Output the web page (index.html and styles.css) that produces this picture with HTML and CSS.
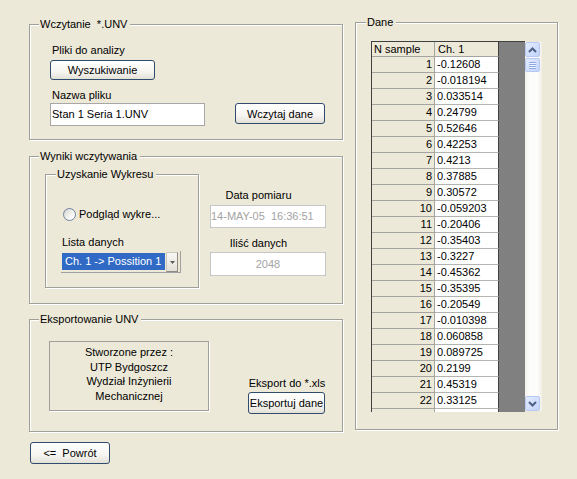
FILE: index.html
```html
<!DOCTYPE html>
<html lang="pl">
<head>
    <meta charset="UTF-8">
    <link rel="stylesheet" href="styles.css">
</head>
<body>
<div class="window">
    <div class="left-col">
        <div class="panel panel-load">
            <div class="panel-title">Wczytanie  *.UNV</div>
            <div class="files-label">Pliki do analizy</div>
            <button class="btn btn-search">Wyszukiwanie</button>
            <div class="name-label">Nazwa pliku</div>
            <div class="file-row">
                <div class="edit file-edit">Stan 1 Seria 1.UNV</div>
                <button class="btn btn-read">Wczytaj dane</button>
            </div>
        </div>

        <div class="panel panel-results">
            <div class="panel-title">Wyniki wczytywania</div>
            <div class="results-body">
                <div class="group">
                    <div class="panel-title group-title">Uzyskanie Wykresu</div>
                    <div class="radio-row">
                        <span class="radio"></span>
                        <span class="radio-text">Podgląd wykre...</span>
                    </div>
                    <div class="list-label">Lista danych</div>
                    <div class="select">
                        <div class="select-value">Ch. 1 -&gt; Possition 1</div>
                        <div class="select-arrow">
                            <svg width="5" height="3" viewBox="0 0 5 3"><path d="M0 0h5L2.5 3z" fill="#5a5a5a"/></svg>
                        </div>
                    </div>
                </div>
                <div class="info-col">
                    <div class="info-label">Data pomiaru</div>
                    <div class="edit info-edit date-edit">14-MAY-05  16:36:51</div>
                    <div class="info-label count-label">Iliść danych</div>
                    <div class="edit info-edit count-edit">2048</div>
                </div>
            </div>
        </div>

        <div class="panel panel-export">
            <div class="panel-title">Eksportowanie UNV</div>
            <div class="export-body">
                <div class="credits">
                    Stworzone przez :<br>
                    UTP Bydgoszcz<br>
                    Wydział Inżynierii<br>
                    Mechanicznej
                </div>
                <div class="export-col">
                    <div class="export-label">Eksport do *.xls</div>
                    <button class="btn btn-export">Eksportuj dane</button>
                </div>
            </div>
        </div>

        <button class="btn btn-back">&lt;=  Powrót</button>
    </div>

    <div class="panel data-panel">
        <div class="panel-title data-title">Dane</div>
        <div class="table-wrap">
            <div class="table-view">
                <div class="grid">
                    <div class="grid-row head-row">
                        <div class="cell-n head-n">N sample</div>
                        <div class="cell-v head-v">Ch. 1</div>
                    </div>
                    <div class="grid-row"><div class="cell-n">1</div><div class="cell-v">-0.12608</div></div>
                    <div class="grid-row"><div class="cell-n">2</div><div class="cell-v">-0.018194</div></div>
                    <div class="grid-row"><div class="cell-n">3</div><div class="cell-v">0.033514</div></div>
                    <div class="grid-row"><div class="cell-n">4</div><div class="cell-v">0.24799</div></div>
                    <div class="grid-row"><div class="cell-n">5</div><div class="cell-v">0.52646</div></div>
                    <div class="grid-row"><div class="cell-n">6</div><div class="cell-v">0.42253</div></div>
                    <div class="grid-row"><div class="cell-n">7</div><div class="cell-v">0.4213</div></div>
                    <div class="grid-row"><div class="cell-n">8</div><div class="cell-v">0.37885</div></div>
                    <div class="grid-row"><div class="cell-n">9</div><div class="cell-v">0.30572</div></div>
                    <div class="grid-row"><div class="cell-n">10</div><div class="cell-v">-0.059203</div></div>
                    <div class="grid-row"><div class="cell-n">11</div><div class="cell-v">-0.20406</div></div>
                    <div class="grid-row"><div class="cell-n">12</div><div class="cell-v">-0.35403</div></div>
                    <div class="grid-row"><div class="cell-n">13</div><div class="cell-v">-0.3227</div></div>
                    <div class="grid-row"><div class="cell-n">14</div><div class="cell-v">-0.45362</div></div>
                    <div class="grid-row"><div class="cell-n">15</div><div class="cell-v">-0.35395</div></div>
                    <div class="grid-row"><div class="cell-n">16</div><div class="cell-v">-0.20549</div></div>
                    <div class="grid-row"><div class="cell-n">17</div><div class="cell-v">-0.010398</div></div>
                    <div class="grid-row"><div class="cell-n">18</div><div class="cell-v">0.060858</div></div>
                    <div class="grid-row"><div class="cell-n">19</div><div class="cell-v">0.089725</div></div>
                    <div class="grid-row"><div class="cell-n">20</div><div class="cell-v">0.2199</div></div>
                    <div class="grid-row"><div class="cell-n">21</div><div class="cell-v">0.45319</div></div>
                    <div class="grid-row"><div class="cell-n">22</div><div class="cell-v">0.33125</div></div>
                    <div class="grid-row"><div class="cell-n"></div><div class="cell-v"></div></div>
                </div>
            </div>
            <div class="scrollbar">
                <div class="scroll-btn">
                    <svg width="9" height="6" viewBox="0 0 9 6"><path d="M1 5l3.5-3.5L8 5" fill="none" stroke="#4d6185" stroke-width="2"/></svg>
                </div>
                <div class="scroll-thumb"><div class="grip"></div></div>
                <div class="scroll-btn scroll-down">
                    <svg width="9" height="6" viewBox="0 0 9 6"><path d="M1 1l3.5 3.5L8 1" fill="none" stroke="#4d6185" stroke-width="2"/></svg>
                </div>
            </div>
        </div>
    </div>
</div>
</body>
</html>
```

FILE: styles.css
```css
body {
    margin: 0;
    background-color: #ECE9D8;
    font-family: "Liberation Sans", Arial, sans-serif;
    font-size: 11px;
    line-height: 14px;
    color: #000;
}
.window {
    display: flex;
    align-items: flex-start;
    padding-left: 29px;
}
.left-col {
    width: 314px;
    margin-top: 24px;
}

/* group boxes (etched line) */
.panel, .group {
    box-sizing: border-box;
    border: 1px solid #a0a09a;
    box-shadow: inset 1px 1px 0 #fff, 1px 1px 0 #fff;
}
.panel-title {
    width: max-content;
    margin: -8px 0 0 9px;
    padding: 0 3px 0 1px;
    background-color: #ECE9D8;
    white-space: pre;
}

/* buttons and edit boxes */
.btn {
    display: block;
    box-sizing: border-box;
    padding: 0;
    font: inherit;
    color: #000;
    border: 1px solid #2f4b6d;
    border-radius: 3px;
    background: linear-gradient(#ffffff, #f6f5f1 60%, #e3e0d6);
    text-align: center;
    white-space: pre;
}
.edit {
    box-sizing: border-box;
    border: 1px solid #a7a7a7;
    background-color: #fff;
    padding-left: 1px;
    line-height: 21px;
    white-space: pre;
    overflow: hidden;
}

/* Wczytanie */
.panel-load {
    height: 116px;
}
.files-label {
    margin: 12px 0 0 22px;
}
.btn-search {
    margin: 3px 0 0 20px;
    width: 105px;
    height: 20px;
}
.name-label {
    margin: 8px 0 0 22px;
}
.file-row {
    display: flex;
    align-items: flex-start;
    margin: 1px 0 0 20px;
}
.file-edit {
    width: 155px;
    height: 23px;
}
.btn-read {
    margin-left: 30px;
    width: 90px;
    height: 21px;
}

/* Wyniki */
.panel-results {
    height: 148px;
    margin-top: 16px;
}
.results-body {
    display: flex;
    align-items: flex-start;
    margin: 11px 0 0 15px;
}
.group {
    width: 154px;
    height: 114px;
}
.group-title {
    margin-left: 10px;
}
.radio-row {
    display: flex;
    align-items: center;
    margin: 26px 0 0 17px;
}
.radio {
    width: 13px;
    height: 13px;
    box-sizing: border-box;
    border: 1px solid #6f82a0;
    border-radius: 50%;
    background: linear-gradient(135deg, #d6d6ce, #ffffff 80%);
}
.radio-text {
    margin-left: 3px;
}
.list-label {
    margin: 14px 0 0 16px;
}
.select {
    display: flex;
    align-items: flex-start;
    width: 120px;
    height: 22px;
    box-sizing: border-box;
    margin: 2px 0 0 15px;
    padding: 1px 2px 0 1px;
    border-right: 1px solid #a0a0a0;
    border-bottom: 1px solid #a0a0a0;
}
.select-value {
    width: 103px;
    height: 17px;
    margin-top: 1px;
    padding-left: 3px;
    box-sizing: border-box;
    background-color: #316AC5;
    color: #fff;
    line-height: 17px;
    white-space: nowrap;
}
.select-arrow {
    display: flex;
    align-items: center;
    justify-content: center;
    width: 12px;
    height: 20px;
    margin-left: 1px;
    box-sizing: border-box;
    border: 1px solid #c9c6ba;
    border-right-color: #8e8c82;
    border-bottom-color: #8e8c82;
    background: linear-gradient(#f8f8f5, #e2e0d7);
}
.info-col {
    width: 116px;
    margin-left: 11px;
}
.info-label {
    width: 97px;
    margin-top: 14px;
    text-align: center;
}
.count-label {
    margin-top: 8px;
}
.info-edit {
    border-color: #c6c6c6;
    color: #a3a3a3;
    padding-left: 0;
}
.date-edit {
    height: 23px;
    margin-top: 3px;
}
.count-edit {
    height: 24px;
    margin-top: 2px;
    line-height: 22px;
    text-align: center;
}

/* Eksport */
.panel-export {
    height: 113px;
    margin-top: 15px;
}
.export-body {
    display: flex;
    align-items: flex-start;
    margin: 15px 0 0 19px;
}
.credits {
    width: 160px;
    height: 70px;
    box-sizing: border-box;
    padding-top: 3px;
    border: 1px solid #a0a09a;
    box-shadow: 1px 1px 0 #fff;
    text-align: center;
    line-height: 14.5px;
}
.export-col {
    width: 78px;
    margin: 35px 0 0 39px;
}
.export-label {
    text-align: center;
    white-space: nowrap;
}
.btn-export {
    margin-top: 2px;
    width: 77px;
    height: 22px;
}
.btn-back {
    margin: 10px 0 0 1px;
    width: 80px;
    height: 22px;
}

/* Dane */
.data-panel {
    width: 203px;
    height: 408px;
    margin: 22px 0 0 12px;
}
.data-title {
    margin-left: 10px;
}
.table-wrap {
    display: flex;
    align-items: flex-start;
    margin: 12px 0 0 15px;
}
.table-view {
    width: 154px;
    height: 371px;
    box-sizing: border-box;
    border-top: 1px solid #404040;
    border-left: 1px solid #404040;
    background-color: #808080;
    overflow: hidden;
}
.grid {
    width: 127px;
}
.grid-row {
    display: flex;
    height: 16px;
    line-height: 15px;
}
.head-row {
    height: 15px;
    line-height: 14px;
}
.cell-n, .cell-v {
    box-sizing: border-box;
    white-space: nowrap;
}
.cell-n {
    width: 63px;
    padding-right: 2px;
    border-right: 1px solid #a4a4a0;
    border-bottom: 1px solid #a4a4a0;
    background-color: #ECE9D8;
    text-align: right;
}
.cell-v {
    width: 64px;
    padding-left: 2px;
    border-right: 1px solid #404040;
    border-bottom: 1px solid #b4b4b0;
    background-color: #fff;
}
.head-n {
    padding: 0 0 0 2px;
    text-align: left;
}
.head-v {
    background-color: #ECE9D8;
    border-bottom-color: #a4a4a0;
    padding-left: 3px;
}

/* scrollbar */
.scrollbar {
    display: flex;
    flex-direction: column;
    align-items: center;
    width: 17px;
    height: 369px;
    margin-top: 1px;
    box-sizing: border-box;
    padding-right: 2px;
    background: linear-gradient(to right, #f3f1ea, #fdfdfb 30%, #fdfdfb 70%, #f1efe6);
}
.scroll-btn, .scroll-thumb {
    width: 15px;
    box-sizing: border-box;
    border: 1px solid #b7c9f3;
    border-radius: 2px;
    background: linear-gradient(135deg, #e3ebfe, #c3d4fb);
}
.scroll-btn {
    display: flex;
    align-items: center;
    justify-content: center;
    height: 15px;
}
.scroll-down {
    margin-top: auto;
}
.scroll-thumb {
    display: flex;
    align-items: center;
    justify-content: center;
    height: 14px;
    margin-top: 1px;
}
.grip {
    width: 7px;
    height: 7px;
    background: repeating-linear-gradient(#8fa9e6 0 1px, #eef3fe 1px 2px);
}
```
